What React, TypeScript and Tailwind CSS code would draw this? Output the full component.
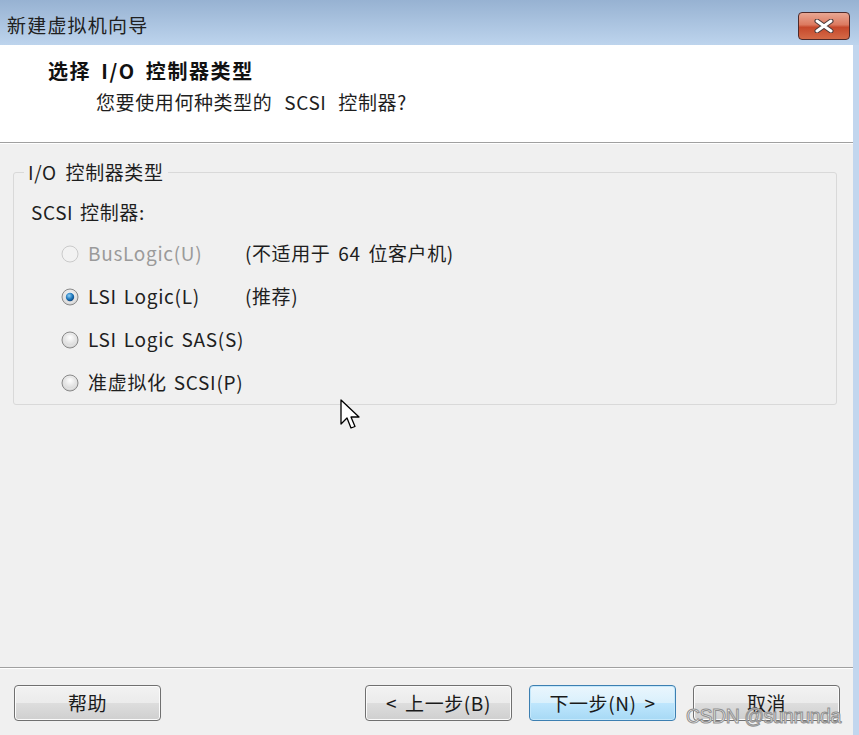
import React from "react";

function Radio({ checked, disabled }: { checked?: boolean; disabled?: boolean }) {
  return (
    <svg width="18" height="18" viewBox="0 0 18 18">
      <defs>
        <radialGradient id="rg" cx="50%" cy="35%" r="65%">
          <stop offset="0%" stopColor="#ffffff" />
          <stop offset="100%" stopColor="#cfcfcf" />
        </radialGradient>
        <radialGradient id="dot" cx="40%" cy="35%" r="70%">
          <stop offset="0%" stopColor="#8fd0f7" />
          <stop offset="60%" stopColor="#1c74b8" />
          <stop offset="100%" stopColor="#0d3f75" />
        </radialGradient>
      </defs>
      <circle cx="9" cy="9" r="8" fill={disabled ? "#f2f2f2" : "url(#rg)"} stroke={disabled ? "#cacaca" : "#8a8a8a"} strokeWidth="1" />
      {!disabled && <circle cx="9" cy="9" r="6" fill="none" stroke="#e6e6e6" strokeWidth="1" />}
      {checked && <circle cx="9" cy="9" r="4.2" fill="url(#dot)" />}
    </svg>
  );
}

function Btn({ children, primary }: { children: React.ReactNode; primary?: boolean }) {
  return (
    <div
      className={
        "w-[147px] h-[36px] rounded-[4px] border flex items-center justify-center whitespace-nowrap text-[19px] tracking-[0.6px] [word-spacing:3px] text-[#1a1a1a] " +
        (primary
          ? "border-[#3c7fb1] bg-[linear-gradient(to_bottom,#eaf6fd_0%,#d9f0fc_50%,#bee6fd_51%,#a7d9f5_100%)] shadow-[inset_0_0_0_1px_#c5e8fb]"
          : "border-[#707070] bg-[linear-gradient(to_bottom,#f2f2f2_0%,#ebebeb_50%,#dddddd_51%,#cfcfcf_100%)] shadow-[inset_0_0_0_1px_#fbfbfb]")
      }
    >
      {children}
    </div>
  );
}

export default function App() {
  const rows = [
    { label: "BusLogic(U)", note: "(不适用于 64 位客户机)", disabled: true },
    { label: "LSI Logic(L)", note: "(推荐)", checked: true },
    { label: "LSI Logic SAS(S)" },
    { label: "准虚拟化 SCSI(P)" },
  ];
  return (
    <div className="relative w-[859px] h-[735px] overflow-hidden flex flex-col font-['Noto_Sans_CJK_SC',sans-serif] text-[#1e1e1e] bg-[#f0f0f0]">
      {/* title bar */}
      <div className="h-[45px] shrink-0 flex items-center justify-between bg-[linear-gradient(to_bottom,#97b2d2,#bdd4ed)]">
        <span className="pl-[7px] pt-[6px] text-[19px] tracking-[1.2px] text-[#202020]">新建虚拟机向导</span>
        <div className="mr-[9px] mt-[7px] w-[52px] h-[28px] rounded-[4px] border border-[#4d2a2a] bg-[linear-gradient(to_bottom,#e9a793_0%,#dc7a60_45%,#c6482b_55%,#d46a47_100%)] flex items-center justify-center">
          <svg width="22" height="14" viewBox="0 0 22 14">
            <path d="M4 2 L18 12 M18 2 L4 12" stroke="#4a3a3a" strokeWidth="5" strokeLinecap="round" />
            <path d="M4 2 L18 12 M18 2 L4 12" stroke="#ffffff" strokeWidth="3" strokeLinecap="round" />
          </svg>
        </div>
      </div>
      <div className="flex flex-1 min-h-0">
        <div className="flex-1 flex flex-col">
          {/* header */}
          <div className="h-[97px] shrink-0 bg-white pt-[13px]">
            <div className="pl-[48px] text-[20px] font-bold leading-[26px] tracking-[1.6px] [word-spacing:4px] text-[#111]">选择 I/O 控制器类型</div>
            <div className="pl-[96px] pt-[5px] text-[19px] leading-[26px] tracking-[0.6px] [word-spacing:7px] text-[#1e1e1e]">您要使用何种类型的 SCSI 控制器?</div>
          </div>
          <div className="h-[1px] bg-[#a0a0a0]" />
          <div className="h-[1px] bg-white" />
          {/* body */}
          <div className="h-[523px] shrink-0 pt-[16px] pl-[13px] pr-[16px]">
            <fieldset className="border border-[#d9d9d9] rounded-[3px] pl-[17px] pb-0">
              <legend className="-ml-[7px] px-[4px] text-[19px] leading-[24px] tracking-[0.6px] [word-spacing:4px] whitespace-nowrap">I/O 控制器类型</legend>
              <div className="pt-[16px] text-[19px] leading-[24px] h-[48px] tracking-[0.6px] [word-spacing:2px] whitespace-nowrap">SCSI 控制器:</div>
              {rows.map((r) => (
                <div key={r.label} className="h-[43px] flex items-center pl-[30px] whitespace-nowrap">
                  <Radio checked={r.checked} disabled={r.disabled} />
                  <span className={"ml-[9px] min-w-[157px] text-[19px] tracking-[0.7px] [word-spacing:2px] " + (r.disabled ? "text-[#9a9a9a]" : "text-[#1e1e1e]")}>{r.label}</span>
                  {r.note && <span className="text-[19px] tracking-[0.6px] [word-spacing:3px]">{r.note}</span>}
                </div>
              ))}
            </fieldset>
          </div>
          {/* footer */}
          <div className="h-[1px] bg-[#a0a0a0]" />
          <div className="h-[1px] bg-white" />
          <div className="flex-1 flex items-start pt-[16px] pl-[14px] pr-[13px]">
            <Btn>帮助</Btn>
            <div className="flex-1" />
            <div className="flex gap-[17px]">
              <Btn>&lt; 上一步(B)</Btn>
              <Btn primary>下一步(N) &gt;</Btn>
              <Btn>取消</Btn>
            </div>
          </div>
        </div>
        <div className="w-[6px] shrink-0 bg-[#c2d6ee]" />
      </div>
      {/* cursor */}
      <svg className="absolute left-[340px] top-[399px]" width="22" height="34" viewBox="0 0 22 34">
        <path d="M1 1 L1 25 L7 19 L11 29 L15 27.5 L11 18 L19 18 Z" fill="#ffffff" stroke="#000000" strokeWidth="1.3" strokeLinejoin="round" />
      </svg>
      {/* watermark */}
      <div className="absolute left-[686px] top-[703px] text-[19.5px] leading-[26px] text-[#f6f6f6] font-['Liberation_Sans',sans-serif] [-webkit-text-stroke:1px_#909090] tracking-[-0.5px] whitespace-nowrap">
        CSDN @sunrunda
      </div>
    </div>
  );
}
